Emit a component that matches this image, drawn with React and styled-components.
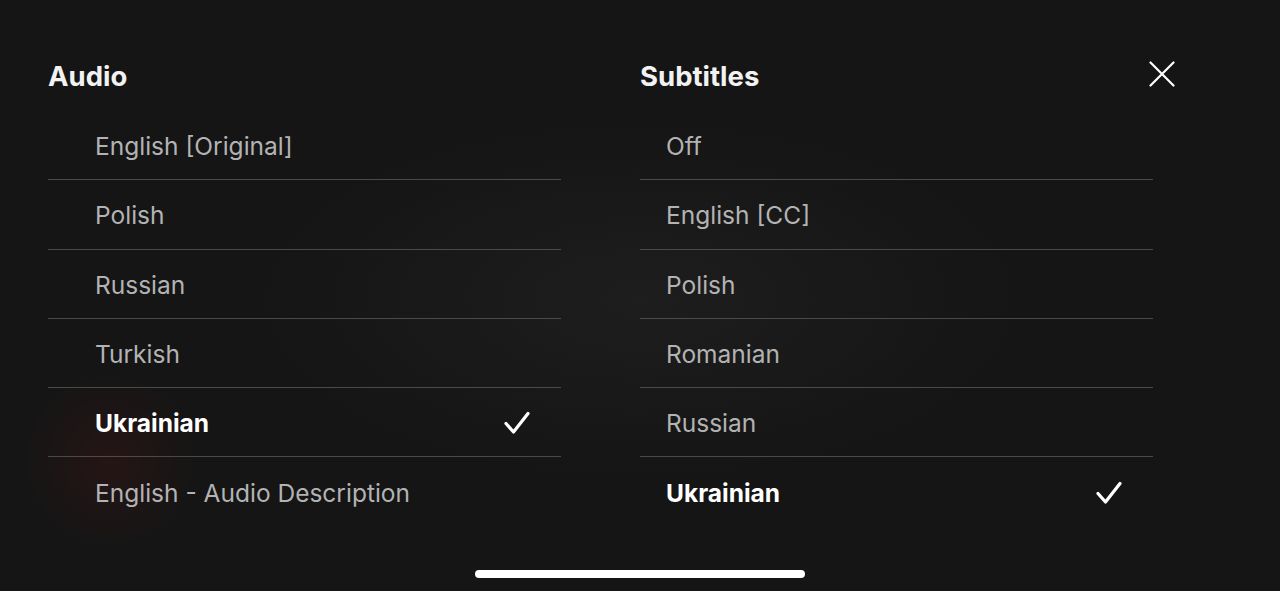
import styled, { createGlobalStyle } from 'styled-components';

const audioList = [
  'English [Original]',
  'Polish',
  'Russian',
  'Turkish',
  'Ukrainian',
  'English - Audio Description',
];
const subtitleList = ['Off', 'English [CC]', 'Polish', 'Romanian', 'Russian', 'Ukrainian'];

const GlobalStyle = createGlobalStyle`
  html, body {
    margin: 0;
    padding: 0;
    background: #151515;
  }
  body {
    font-family: Inter, "Noto Sans", sans-serif;
    -webkit-font-smoothing: antialiased;
  }
`;

function Check() {
  return (
    <svg width="26" height="24" viewBox="0 0 26 24" fill="none">
      <path d="M2 12.5 L9.5 21 L24 2.5" stroke="#fff" strokeWidth="3.2" strokeLinecap="round" strokeLinejoin="round" />
    </svg>
  );
}

function Menu({ title, items, selected, indent }) {
  return (
    <Column>
      <Heading>{title}</Heading>
      <List>
        {items.map((item) => (
          <Row key={item} $indent={indent}>
            <Label $active={item === selected}>{item}</Label>
            {item === selected && <Check />}
          </Row>
        ))}
      </List>
    </Column>
  );
}

export default function App() {
  return (
    <Screen>
      <GlobalStyle />
      <Panels>
        <Menu title="Audio" items={audioList} selected="Ukrainian" indent={47} />
        <Menu title="Subtitles" items={subtitleList} selected="Ukrainian" indent={26} />
        <CloseButton aria-label="Close">
          <svg width="26" height="26" viewBox="0 0 26 26" fill="none">
            <path d="M1.5 1.5 L24.5 24.5 M24.5 1.5 L1.5 24.5" stroke="#fff" strokeWidth="2.2" strokeLinecap="round" />
          </svg>
        </CloseButton>
      </Panels>
      <HomeBar />
    </Screen>
  );
}

const Screen = styled.div`
  width: 1280px;
  height: 591px;
  box-sizing: border-box;
  padding-top: 56px;
  position: relative;
  overflow: hidden;
  background:
    radial-gradient(circle at 110px 460px, rgba(70, 20, 20, 0.35), transparent 90px),
    radial-gradient(ellipse at 640px 300px, rgba(40, 40, 40, 0.45), transparent 380px),
    #151515;
`;

const Panels = styled.div`
  display: flex;
  align-items: flex-start;
  padding-left: 48px;
`;

const Column = styled.div`
  width: 513px;
  display: flex;
  flex-direction: column;
  & + & {
    margin-left: 79px;
  }
`;

const Heading = styled.h2`
  margin: 0;
  height: 55px;
  line-height: 40px;
  font-size: 27.5px;
  font-weight: 700;
  color: #f2f2f2;
`;

const List = styled.div`
  display: flex;
  flex-direction: column;
`;

const Row = styled.div`
  height: 69.3px;
  box-sizing: border-box;
  display: flex;
  align-items: center;
  justify-content: space-between;
  padding-top: 2px;
  padding-left: ${({ $indent }) => $indent}px;
  padding-right: 31px;
  &:not(:last-child) {
    border-bottom: 1.5px solid #4a4a4a;
  }
`;

const Label = styled.span`
  font-size: 24.5px;
  font-weight: ${({ $active }) => ($active ? 700 : 400)};
  color: ${({ $active }) => ($active ? '#ffffff' : '#b3b3b3')};
`;

const CloseButton = styled.button`
  margin-left: -4px;
  margin-top: 5px;
  padding: 0;
  border: 0;
  background: none;
  display: flex;
  cursor: pointer;
`;

const HomeBar = styled.div`
  position: absolute;
  left: 475px;
  top: 570px;
  width: 330px;
  height: 8px;
  border-radius: 4px;
  background: #ffffff;
`;
